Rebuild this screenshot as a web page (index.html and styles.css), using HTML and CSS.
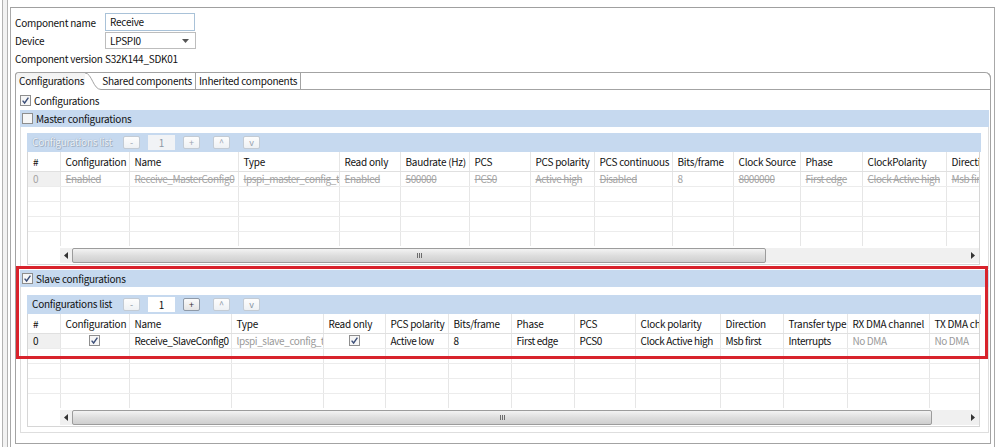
FILE: index.html
```html
<!DOCTYPE html>
<html>
<head>
<meta charset="utf-8">
<title>Component</title>
<link rel="stylesheet" href="styles.css">
</head>
<body>
<div class="app">
  <div class="sash"></div>
  <div class="editor">
    <div class="form">
      <div class="lbl">Component name</div>
      <div class="textbox">Receive</div>
      <div class="lbl">Device</div>
      <div class="combo"><span>LPSPI0</span><svg class="arrow" width="7" height="4" viewBox="0 0 7 4"><path d="M0 0 H7 L3.5 4 Z" fill="#555"/></svg></div>
      <div class="lbl">Component version</div>
      <div class="val">S32K144_SDK01</div>
    </div>

    <div class="tabfolder">
      <div class="tabstrip">
        <div class="tab active">Configurations</div>
        <svg class="curve" width="16" height="17" viewBox="0 0 16 17"><path d="M0 0 C7 0 8 16.5 16 16.5" fill="none" stroke="#a3a3a3"/></svg>
        <div class="tab first">Shared components</div>
        <div class="tab">Inherited components</div>
        <div class="tabfill"></div>
      </div>
      <div class="tabbody">
        <div class="checkrow">
          <svg class="cb" width="11" height="11" viewBox="0 0 11 11"><rect x="0.5" y="0.5" width="10" height="10" fill="#f6f6f6" stroke="#8e8e8e"/><path d="M2.6 5.6 L4.6 8 L8.4 2.6" fill="none" stroke="#3c4f78" stroke-width="1.4"/></svg>
          <span>Configurations</span>
        </div>

        <section class="section master">
          <div class="sec-head">
            <svg class="cb" width="11" height="11" viewBox="0 0 11 11"><rect x="0.5" y="0.5" width="10" height="10" fill="#f6f6f6" stroke="#8e8e8e"/></svg>
            <span>Master configurations</span>
          </div>
          <div class="sec-body">
            <div class="listbar disabled">
              <span class="listlbl">Configurations list</span>
              <span class="btn minus">-</span>
              <span class="field">1</span>
              <span class="btn plus">+</span>
              <span class="btn up">^</span>
              <span class="btn down">v</span>
            </div>
            <div class="grid">
              <table class="tbl tm">
                <colgroup>
                  <col class="w32"><col class="w69"><col class="w109"><col class="w101"><col class="w61"><col class="w69"><col class="w61"><col class="w64"><col class="w78"><col class="w61"><col class="w67"><col class="w62"><col class="w84"><col class="w80">
                </colgroup>
                <thead>
                  <tr><th>#</th><th>Configuration</th><th>Name</th><th>Type</th><th>Read only</th><th>Baudrate (Hz)</th><th>PCS</th><th>PCS polarity</th><th>PCS continuous</th><th>Bits/frame</th><th>Clock Source</th><th>Phase</th><th>ClockPolarity</th><th>Direction</th></tr>
                </thead>
                <tbody>
                  <tr class="dis"><td class="rh">0</td><td class="st">Enabled</td><td class="st">Receive_MasterConfig0</td><td class="st">lpspi_master_config_t</td><td class="st">Enabled</td><td class="st">500000</td><td class="st">PCS0</td><td class="st">Active high</td><td class="st">Disabled</td><td>8</td><td class="st">8000000</td><td class="st">First edge</td><td class="st">Clock Active high</td><td class="st">Msb first</td></tr>
                  <tr><td></td><td></td><td></td><td></td><td></td><td></td><td></td><td></td><td></td><td></td><td></td><td></td><td></td><td></td></tr>
                  <tr><td></td><td></td><td></td><td></td><td></td><td></td><td></td><td></td><td></td><td></td><td></td><td></td><td></td><td></td></tr>
                  <tr><td></td><td></td><td></td><td></td><td></td><td></td><td></td><td></td><td></td><td></td><td></td><td></td><td></td><td></td></tr>
                  <tr class="last"><td></td><td></td><td></td><td></td><td></td><td></td><td></td><td></td><td></td><td></td><td></td><td></td><td></td><td></td></tr>
                </tbody>
              </table>
              <div class="hscroll">
                <span class="sarrow"><svg width="4" height="7" viewBox="0 0 4 7"><path d="M4 0 V7 L0 3.5 Z" fill="#333"/></svg></span>
                <span class="thumb tm-thumb"><i></i><i></i><i></i></span>
                <span class="track"></span>
                <span class="sarrow"><svg width="4" height="7" viewBox="0 0 4 7"><path d="M0 0 V7 L4 3.5 Z" fill="#333"/></svg></span>
              </div>
            </div>
          </div>
        </section>

        <section class="section slave">
          <div class="redbox"></div>
          <div class="sec-head">
            <svg class="cb" width="11" height="11" viewBox="0 0 11 11"><rect x="0.5" y="0.5" width="10" height="10" fill="#f6f6f6" stroke="#8e8e8e"/><path d="M2.6 5.6 L4.6 8 L8.4 2.6" fill="none" stroke="#3c4f78" stroke-width="1.4"/></svg>
            <span>Slave configurations</span>
          </div>
          <div class="sec-body">
            <div class="listbar">
              <span class="listlbl">Configurations list</span>
              <span class="btn minus dim">-</span>
              <span class="field">1</span>
              <span class="btn plus">+</span>
              <span class="btn up dim">^</span>
              <span class="btn down dim">v</span>
            </div>
            <div class="grid">
              <table class="tbl ts">
                <colgroup>
                  <col class="w32"><col class="w69"><col class="w102"><col class="w92"><col class="w62"><col class="w63"><col class="w63"><col class="w63"><col class="w61"><col class="w85"><col class="w63"><col class="w64"><col class="w82"><col class="w80">
                </colgroup>
                <thead>
                  <tr><th>#</th><th>Configuration</th><th>Name</th><th>Type</th><th>Read only</th><th>PCS polarity</th><th>Bits/frame</th><th>Phase</th><th>PCS</th><th>Clock polarity</th><th>Direction</th><th>Transfer type</th><th>RX DMA channel</th><th>TX DMA channel</th></tr>
                </thead>
                <tbody>
                  <tr><td class="rh">0</td><td class="c"><svg class="cb" width="11" height="11" viewBox="0 0 11 11"><rect x="0.5" y="0.5" width="10" height="10" fill="#f6f6f6" stroke="#8e8e8e"/><path d="M2.6 5.6 L4.6 8 L8.4 2.6" fill="none" stroke="#3c4f78" stroke-width="1.4"/></svg></td><td>Receive_SlaveConfig0</td><td class="g">lpspi_slave_config_t</td><td class="c"><svg class="cb" width="11" height="11" viewBox="0 0 11 11"><rect x="0.5" y="0.5" width="10" height="10" fill="#f6f6f6" stroke="#8e8e8e"/><path d="M2.6 5.6 L4.6 8 L8.4 2.6" fill="none" stroke="#3c4f78" stroke-width="1.4"/></svg></td><td>Active low</td><td>8</td><td>First edge</td><td>PCS0</td><td>Clock Active high</td><td>Msb first</td><td>Interrupts</td><td class="g">No DMA</td><td class="g">No DMA</td></tr>
                  <tr><td></td><td></td><td></td><td></td><td></td><td></td><td></td><td></td><td></td><td></td><td></td><td></td><td></td><td></td></tr>
                  <tr><td></td><td></td><td></td><td></td><td></td><td></td><td></td><td></td><td></td><td></td><td></td><td></td><td></td><td></td></tr>
                  <tr><td></td><td></td><td></td><td></td><td></td><td></td><td></td><td></td><td></td><td></td><td></td><td></td><td></td><td></td></tr>
                  <tr class="last"><td></td><td></td><td></td><td></td><td></td><td></td><td></td><td></td><td></td><td></td><td></td><td></td><td></td><td></td></tr>
                </tbody>
              </table>
              <div class="hscroll">
                <span class="sarrow"><svg width="4" height="7" viewBox="0 0 4 7"><path d="M4 0 V7 L0 3.5 Z" fill="#333"/></svg></span>
                <span class="thumb ts-thumb"><i></i><i></i><i></i></span>
                <span class="track"></span>
                <span class="sarrow"><svg width="4" height="7" viewBox="0 0 4 7"><path d="M0 0 V7 L4 3.5 Z" fill="#333"/></svg></span>
              </div>
            </div>
          </div>
        </section>
      </div>
    </div>
  </div>
</div>
</body>
</html>
```

FILE: styles.css
```css
* { box-sizing: border-box; }
html, body { margin: 0; padding: 0; background: #fff; }
body {
  font-family: "Noto Sans CJK KR", "Noto Sans", sans-serif;
  font-size: 10px;
  letter-spacing: -0.25px;
  line-height: 15px;
  color: #111;
  width: 999px;
  height: 447px;
  overflow: hidden;
  white-space: nowrap;
}
.app { display: flex; height: 447px; }

.sash {
  flex: none;
  width: 6px;
  margin-left: 2px;
  border-left: 1px solid #b2b2b2;
  border-right: 1px solid #b2b2b2;
  background: #f2f2f2;
}

.editor {
  flex: 1;
  margin: 7px 4px 0 2px;
  border-top: 1px solid #a0a0a0;
  border-left: 1px solid #a8a8a8;
  border-right: 1px solid #a8a8a8;
  padding: 5px 3px 0 4px;
  min-width: 0;
}

/* form */
.form {
  display: grid;
  grid-template-columns: 90px auto;
  grid-template-rows: 18px 17px 17px;
  row-gap: 1px;
  align-items: center;
  justify-items: start;
  margin-bottom: 5px;
}
.textbox {
  width: 90px; height: 18px;
  border: 1px solid #a9c2d8;
  padding: 0 4px;
  line-height: 16px;
}
.combo {
  width: 91px; height: 17px;
  border: 1px solid #bdbdbd;
  padding: 0 4px;
  line-height: 15px;
  display: flex; align-items: center; justify-content: space-between;
}
.combo .arrow { margin-right: 2px; }

/* tabs */
.tabfolder {
  border-left: 1px solid #a3a3a3;
  border-right: 1px solid #a3a3a3;
  border-bottom: 1px solid #a3a3a3;
  border-radius: 4px 6px 0 0;
}
.tabstrip {
  display: flex;
  height: 18px;
  border-top: 1px solid #a3a3a3;
  border-radius: 4px 6px 0 0;
  margin: 0 -1px;
  border-left: 1px solid #a3a3a3;
  border-right: 1px solid #a3a3a3;
}
.tab {
  height: 17px;
  line-height: 16px;
  padding: 0 3px;
  border-bottom: 1px solid #a3a3a3;
  border-right: 1px solid #a3a3a3;
}
.tab.active {
  border: none;
  padding: 0 1px 0 3px;
  background: linear-gradient(#f2f2f2, #fff);
  border-top-left-radius: 4px;
}
.tab.first { padding-left: 1px; }
.curve { flex: none; display: block; }
.tabfill { flex: 1; border-bottom: 1px solid #a3a3a3; }

.tabbody { padding: 3px 1px 10px 4px; }
.checkrow {
  display: flex; align-items: center; gap: 3px;
  height: 14px; margin-bottom: 3px;
}
.cb { display: block; flex: none; }

/* sections */
.section { position: relative; }
.section.slave { margin-top: 1px; }
.sec-head {
  height: 17px;
  background: #c6d9ef;
  display: flex; align-items: center; gap: 3px;
  padding-left: 2px;
}
.sec-body {
  border: 1px solid #dedede;
  border-top: none;
  padding: 6px 7px 3px 6px;
}
.slave .sec-body { padding-top: 8px; padding-bottom: 5px; }

.redbox {
  position: absolute;
  left: -4px; top: -4px;
  width: 972px; height: 93px;
  border: 3px solid #d8232c;
  pointer-events: none;
  z-index: 2;
}

.listbar {
  height: 19px;
  background: #c6d9ef;
  display: flex; align-items: center;
  padding-left: 5px;
}
.listlbl { width: 91px; margin-top: -2px; }
.btn {
  width: 17px; height: 13px;
  border: 1px solid #8f9aa8;
  border-radius: 2px;
  background: linear-gradient(#fbfbfb, #e4e4e4);
  font-size: 9px; line-height: 11px;
  letter-spacing: 0;
  text-align: center;
  color: #333;
}
.btn.minus { margin-right: 8px; }
.btn.plus { margin-right: 13px; }
.btn.up { margin-right: 13px; }
.btn.dim { border-color: #c3cbd4; color: #8a95a3; background: linear-gradient(#fdfdfd, #eef1f4); }
.field {
  width: 27px; height: 15px;
  background: #fff;
  text-align: center;
  line-height: 15px;
  margin-right: 8px;
}
.listbar.disabled .listlbl { color: #eef3f9; text-shadow: 0 0 1px #8496ad, 1px 1px 0 #a5b4c6; }
.listbar.disabled .btn { border-color: #c3cbd4; color: #9aa4b0; background: linear-gradient(#fdfdfd, #eef1f4); }
.listbar.disabled .field { background: #f1f3f6; color: #8e99a5; }

/* grid */
.grid {
  margin-right: 1px;
  border: 1px solid #d6d6d6;
  border-top: none;
  overflow: hidden;
}
.tbl { border-collapse: collapse; table-layout: fixed; }
.tbl.tm { width: 998px; }
.tbl.ts { width: 981px; }
.w32 { width: 32px; } .w61 { width: 61px; } .w62 { width: 62px; } .w63 { width: 63px; }
.w64 { width: 64px; } .w67 { width: 67px; } .w69 { width: 69px; } .w78 { width: 78px; }
.w80 { width: 80px; } .w82 { width: 82px; } .w84 { width: 84px; } .w85 { width: 85px; }
.w92 { width: 92px; } .w99 { width: 99px; } .w101 { width: 101px; } .w102 { width: 102px; } .w109 { width: 109px; }
.tbl th, .tbl td {
  padding: 0 0 0 5px;
  overflow: hidden;
  text-overflow: clip;
  text-align: left;
  font-weight: normal;
  border-right: 1px solid #e6e6e6;
  border-bottom: 1px solid #ececec;
}
.tbl th { height: 19px; border-bottom-color: #e0e0e0; color: #111; }
.tbl td { height: 15px; line-height: 14px; letter-spacing: -0.4px; }
.tbl tr.last td { border-bottom: none; }
.tbl td.rh { background: #f0f0f0; }
.tbl td.c { padding: 0; }
.tbl td.c .cb { margin: 0 auto; }
.tbl td.g { color: #9a9a9a; }
.tbl tr.dis td { color: #a4a4a4; }
.tbl td.st { text-decoration: line-through; }

.hscroll {
  display: flex;
  height: 15px;
  margin: 2px 0 1px 32px;
  background: #f0f0f0;
}
.sarrow {
  width: 12px; flex: none;
  display: flex; align-items: center; justify-content: center;
}
.thumb {
  flex: none;
  border: 1px solid #9c9c9c;
  border-radius: 2px;
  background: linear-gradient(#f3f3f3, #dedede 50%, #cfcfcf);
  display: flex; align-items: center; justify-content: center; gap: 1px;
}
.thumb i { display: block; width: 1px; height: 5px; background: #6c6c6c; }
.tm-thumb { width: 694px; }
.ts-thumb { width: 860px; }
.track { flex: 1; }
```
